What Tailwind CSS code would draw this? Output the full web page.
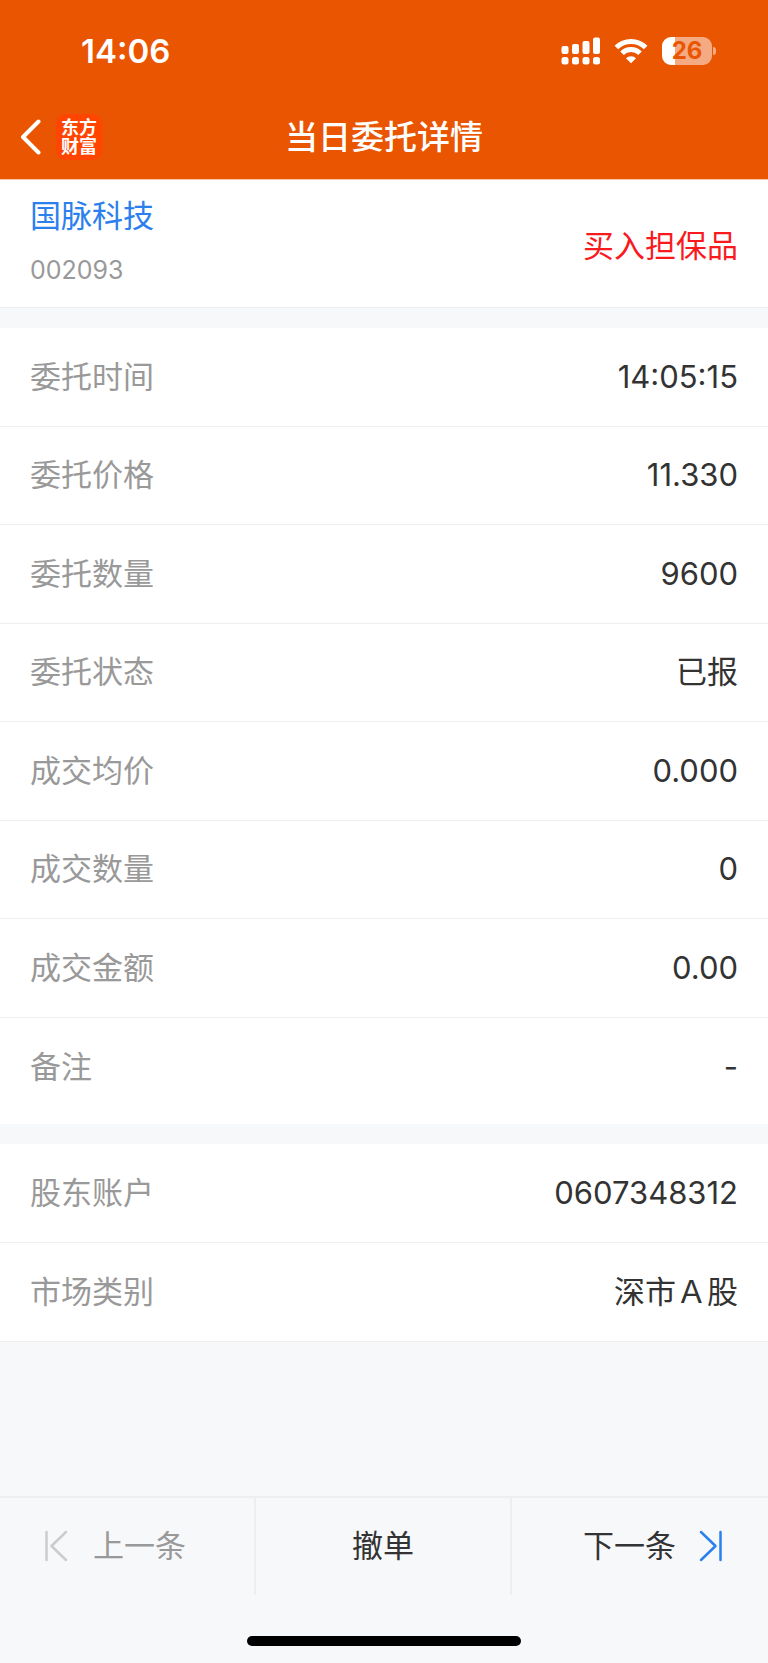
<!DOCTYPE html>
<html lang="zh-CN">
<head>
<meta charset="utf-8">
<meta name="viewport" content="width=device-width, initial-scale=1">
<title>当日委托详情</title>
<script src="https://cdn.jsdelivr.net/npm/@tailwindcss/browser@4"></script>
</head>
<body class="flex min-h-screen flex-col bg-[#f7f8fa] font-['Inter','Noto_Sans_CJK_SC',sans-serif] text-[31px] leading-[44px] text-[#333333]">

<header class="border-b border-[#f5c3a6] bg-[#ea5502] text-white">
  <!-- Status bar -->
  <div class="flex h-[94px] items-center justify-between pt-2 pr-[52px] pl-[81px]">
    <time class="text-[33px] font-semibold">14:06</time>
    <div class="flex items-center gap-[14px]">
      <svg class="h-7 w-10" viewBox="0 0 40 28" fill="#fff" aria-label="信号">
        <rect x="1.500" y="9" width="7" height="8" rx="2"/>
        <rect x="12" y="7" width="7" height="10" rx="2"/>
        <rect x="22.500" y="4" width="7" height="13" rx="2"/>
        <rect x="33" y="0.500" width="7" height="16.500" rx="2"/>
        <rect x="1.500" y="20" width="7" height="7.500" rx="2.500"/>
        <rect x="12" y="20" width="7" height="7.500" rx="2.500"/>
        <rect x="22.500" y="20" width="7" height="7.500" rx="2.500"/>
        <rect x="33" y="20" width="7" height="7.500" rx="2.500"/>
      </svg>
      <svg class="h-7 w-[34px]" viewBox="0 0 34 28" aria-label="无线网络">
        <path d="M2.400 10.500a20.600 20.600 0 0 1 29.200 0" fill="none" stroke="#fff" stroke-width="5"/>
        <path d="M8 16.200a12.700 12.700 0 0 1 18 0" fill="none" stroke="#fff" stroke-width="5"/>
        <path d="M17 26.300l-5-5a7 7 0 0 1 10 0z" fill="#fff"/>
      </svg>
      <div class="flex items-center gap-px">
        <div class="flex h-7 w-[50px] items-center justify-center rounded-[9px] bg-linear-to-r from-white from-26% to-[#f4aa82] to-26% text-2xl font-bold text-[#ea5502]">26</div>
        <div class="h-2 w-[3px] rounded-r-full bg-[#f4aa82]"></div>
      </div>
    </div>
  </div>
  <!-- Navigation bar -->
  <div class="grid h-[85px] grid-cols-[1fr_auto_1fr] items-center px-5">
    <div class="flex items-center gap-[14px]">
      <button type="button" aria-label="返回" class="cursor-pointer">
        <svg class="h-9 w-[22px]" viewBox="0 0 22 36" fill="none" stroke="#fff" stroke-width="4" stroke-linecap="round" stroke-linejoin="round"><path d="M18.500 2.500L3 18l15.500 15.500"/></svg>
      </button>
      <div class="flex h-[46px] w-[46px] items-center justify-center rounded-[10px] bg-[#ff4500] text-center text-[18px] leading-[19px] font-bold">东方<br>财富</div>
    </div>
    <h1 class="text-[33px] font-medium">当日委托详情</h1>
  </div>
</header>

<main class="flex flex-col gap-5">
  <section class="flex min-h-[128px] items-center justify-between border-b border-[#eeeeee] bg-white px-[30px]">
    <div class="pb-1">
      <a href="#" class="block text-[#2b80ee]">国脉科技</a>
      <p class="pt-3 text-[25px] leading-[40px] text-[#999999]">002093</p>
    </div>
    <p class="pt-1 text-[#f91a1e]">买入担保品</p>
  </section>

  <dl class="grid min-h-[796px] auto-rows-fr bg-white pb-2">
    <div class="flex items-center justify-between border-b border-[#eeeeee] px-[30px]"><dt class="text-[#999999]">委托时间</dt><dd>14:05:15</dd></div>
    <div class="flex items-center justify-between border-b border-[#eeeeee] px-[30px]"><dt class="text-[#999999]">委托价格</dt><dd>11.330</dd></div>
    <div class="flex items-center justify-between border-b border-[#eeeeee] px-[30px]"><dt class="text-[#999999]">委托数量</dt><dd>9600</dd></div>
    <div class="flex items-center justify-between border-b border-[#eeeeee] px-[30px]"><dt class="text-[#999999]">委托状态</dt><dd>已报</dd></div>
    <div class="flex items-center justify-between border-b border-[#eeeeee] px-[30px]"><dt class="text-[#999999]">成交均价</dt><dd>0.000</dd></div>
    <div class="flex items-center justify-between border-b border-[#eeeeee] px-[30px]"><dt class="text-[#999999]">成交数量</dt><dd>0</dd></div>
    <div class="flex items-center justify-between border-b border-[#eeeeee] px-[30px]"><dt class="text-[#999999]">成交金额</dt><dd>0.00</dd></div>
    <div class="flex items-center justify-between px-[30px]"><dt class="text-[#999999]">备注</dt><dd>-</dd></div>
  </dl>

  <dl class="grid min-h-[198px] auto-rows-fr bg-white">
    <div class="flex items-center justify-between border-b border-[#eeeeee] px-[30px]"><dt class="text-[#999999]">股东账户</dt><dd>0607348312</dd></div>
    <div class="flex items-center justify-between border-b border-[#eeeeee] px-[30px]"><dt class="text-[#999999]">市场类别</dt><dd>深市Ａ股</dd></div>
  </dl>
</main>

<footer class="mt-auto border-t-2 border-[#eeeeee]">
  <div class="grid h-[97px] grid-cols-3">
    <button type="button" disabled class="flex items-center gap-[25px] border-r-2 border-[#eeeeee] pb-0.5 pl-11 text-[#999999]">
      <svg class="h-8 w-6" viewBox="0 0 24 32" fill="none" stroke="#cccccc" stroke-width="2.500" stroke-linecap="round" stroke-linejoin="round"><path d="M2.500 2v28M22 2L7.500 16 22 30"/></svg>
      上一条
    </button>
    <button type="button" class="cursor-pointer border-r-2 border-[#eeeeee] pb-0.5">撤单</button>
    <button type="button" class="flex cursor-pointer items-center justify-end gap-[23px] pr-[45px] pb-0.5">
      下一条
      <svg class="h-8 w-6" viewBox="0 0 24 32" fill="none" stroke="#2b80ee" stroke-width="2.500" stroke-linecap="round" stroke-linejoin="round"><path d="M21.500 2v28M2 2l14.500 14L2 30"/></svg>
    </button>
  </div>
  <div class="flex h-[68px] items-end justify-center pb-[17px]">
    <div class="h-[10px] w-[274px] rounded-full bg-black"></div>
  </div>
</footer>
</body>
</html>
